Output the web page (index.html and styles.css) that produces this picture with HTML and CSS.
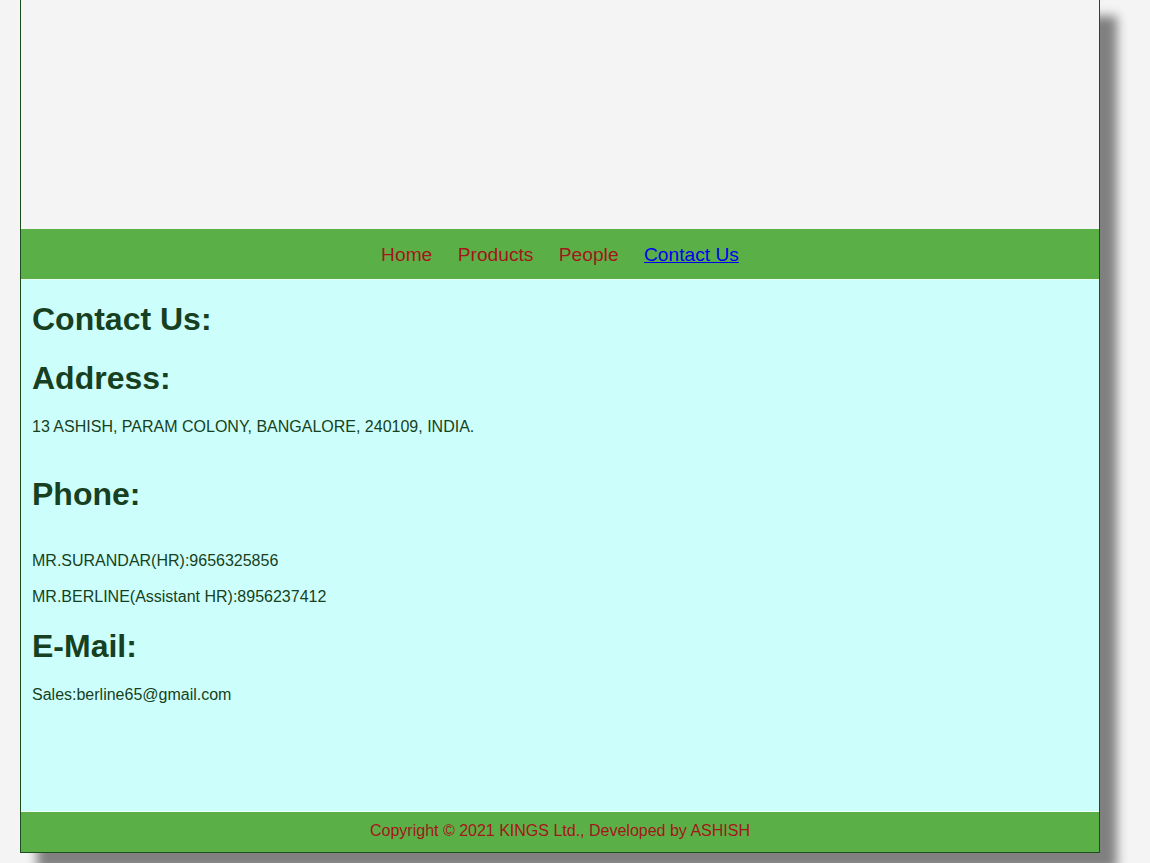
FILE: index.html
```html
<!DOCTYPE html>
<html>
<head>
<meta charset="utf-8">
<title>Contact Us - KINGS Ltd.</title>
<link rel="stylesheet" href="styles.css">
</head>
<body>
<div class="page">
  <div class="banner"></div>
  <nav class="nav">
    <a class="nav-link" href="#">Home</a>
    <a class="nav-link" href="#">Products</a>
    <a class="nav-link" href="#">People</a>
    <a class="nav-link active" href="#">Contact Us</a>
  </nav>
  <main class="content">
    <h2 class="heading first">Contact Us:</h2>
    <h2 class="heading">Address:</h2>
    <p class="text">13 ASHISH, PARAM COLONY, BANGALORE, 240109, INDIA.</p>
    <h2 class="heading gap-40">Phone:</h2>
    <p class="text gap-39">MR.SURANDAR(HR):9656325856</p>
    <p class="text gap-18">MR.BERLINE(Assistant HR):8956237412</p>
    <h2 class="heading">E-Mail:</h2>
    <p class="text">Sales:berline65@gmail.com</p>
  </main>
  <footer class="footer">Copyright © 2021 KINGS Ltd., Developed by ASHISH</footer>
</div>
</body>
</html>
```
FILE: styles.css
```css
html, body {
  margin: 0;
  padding: 0;
}
html {
  background: #f4f4f4;
}
body {
  background: #f4f4f4;
  font-family: "Liberation Sans", Arial, sans-serif;
  padding-bottom: 11px;
  overflow: hidden;
}
.page {
  width: 1078px;
  margin: -1px 0 0 20px;
  border: 1px solid #1b4d1f;
  background: #f4f4f4;
  box-shadow: 17px 17px 10px #808080;
}
.banner {
  height: 229px;
}
.nav {
  display: flex;
  justify-content: center;
  gap: 25.4px;
  height: 48px;
  padding-top: 2px;
  line-height: 48px;
  background: #5ab046;
}
.nav-link {
  font-size: 19.2px;
  color: #a3161b;
  text-decoration: none;
}
.nav-link.active {
  color: #0000ee;
  text-decoration: underline;
}
.content {
  height: 531px;
  padding: 0 11px;
  background: #ccfffc;
  border-top: 1px solid #e6fff0;
  border-bottom: 1px solid #f2fff6;
  color: #173f21;
  overflow: hidden;
}
.heading {
  font-size: 32px;
  font-weight: bold;
  line-height: 37px;
  margin: 22px 0 0;
}
.text {
  font-size: 16px;
  line-height: 18px;
  margin: 21px 0 0;
}
.heading.first {
  margin-top: 21px;
}
.gap-40 {
  margin-top: 40px;
}
.gap-39 {
  margin-top: 39px;
}
.text.gap-18 {
  margin-top: 18px;
}
.footer {
  height: 38px;
  line-height: 38px;
  padding-bottom: 2px;
  text-align: center;
  font-size: 16px;
  color: #a3161b;
  background: #5ab046;
}
```
